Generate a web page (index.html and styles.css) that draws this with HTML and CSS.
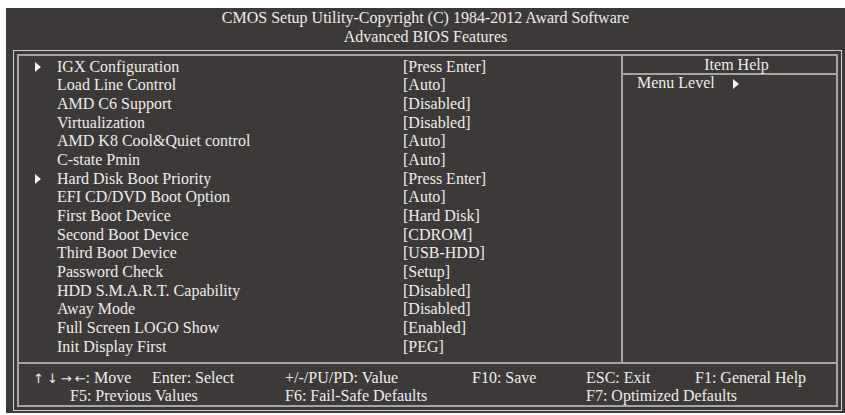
FILE: index.html
```html
<!DOCTYPE html>
<html>
<head>
  <meta charset="UTF-8">
  <title>Advanced BIOS Features</title>
  <link rel="stylesheet" href="styles.css">
</head>
<body>
  <div class="screen">
    <div class="title">
      CMOS Setup Utility-Copyright (C) 1984-2012 Award Software<br>
      Advanced BIOS Features
    </div>
    <div class="frame">
      <div class="frame-inner">
        <div class="body">
          <div class="items">
            <div class="row"><span class="mark"><span class="arrow"></span></span><span>IGX Configuration</span><span>[Press Enter]</span></div>
            <div class="row"><span class="mark"></span><span>Load Line Control</span><span>[Auto]</span></div>
            <div class="row"><span class="mark"></span><span>AMD C6 Support</span><span>[Disabled]</span></div>
            <div class="row"><span class="mark"></span><span>Virtualization</span><span>[Disabled]</span></div>
            <div class="row"><span class="mark"></span><span>AMD K8 Cool&amp;Quiet control</span><span>[Auto]</span></div>
            <div class="row"><span class="mark"></span><span>C-state Pmin</span><span>[Auto]</span></div>
            <div class="row"><span class="mark"><span class="arrow"></span></span><span>Hard Disk Boot Priority</span><span>[Press Enter]</span></div>
            <div class="row"><span class="mark"></span><span>EFI CD/DVD Boot Option</span><span>[Auto]</span></div>
            <div class="row"><span class="mark"></span><span>First Boot Device</span><span>[Hard Disk]</span></div>
            <div class="row"><span class="mark"></span><span>Second Boot Device</span><span>[CDROM]</span></div>
            <div class="row"><span class="mark"></span><span>Third Boot Device</span><span>[USB-HDD]</span></div>
            <div class="row"><span class="mark"></span><span>Password Check</span><span>[Setup]</span></div>
            <div class="row"><span class="mark"></span><span>HDD S.M.A.R.T. Capability</span><span>[Disabled]</span></div>
            <div class="row"><span class="mark"></span><span>Away Mode</span><span>[Disabled]</span></div>
            <div class="row"><span class="mark"></span><span>Full Screen LOGO Show</span><span>[Enabled]</span></div>
            <div class="row"><span class="mark"></span><span>Init Display First</span><span>[PEG]</span></div>
          </div>
          <div class="help">
            <div class="help-title">Item Help</div>
            <div class="help-text">Menu Level <span class="arrow help-arrow"></span></div>
          </div>
        </div>
        <div class="keys">
          <span><span class="dirs">&uarr;&darr;&rarr;&larr;</span>: Move</span>
          <span>Enter: Select</span>
          <span>+/-/PU/PD: Value</span>
          <span>F10: Save</span>
          <span>ESC: Exit</span>
          <span>F1: General Help</span>
          <span class="span2 indent">F5: Previous Values</span>
          <span class="span2">F6: Fail-Safe Defaults</span>
          <span class="span2">F7: Optimized Defaults</span>
        </div>
      </div>
    </div>
  </div>
</body>
</html>
```

FILE: styles.css
```css
body {
  margin: 0;
  background: #fff;
  font-family: "Liberation Serif", "Times New Roman", serif;
  font-size: 16px;
  color: #ececec;
}
.screen {
  margin: 8px 0 0 6px;
  width: 839px;
  height: 405px;
  background: #3d3938;
  overflow: hidden;
}
.title {
  height: 42px;
  padding-top: 1px;
  box-sizing: border-box;
  text-align: center;
  line-height: 18.7px;
}
.frame {
  margin: 0 3px 0 7px;
  height: 361px;
  box-sizing: border-box;
  border: 1px solid #cfcfcf;
  padding: 3px;
}
.frame-inner {
  height: 100%;
  box-sizing: border-box;
  border: 2px solid #a4a4a4;
  display: flex;
  flex-direction: column;
}
.body {
  display: flex;
  height: 307px;
  border-bottom: 2px solid #a4a4a4;
}
.items {
  width: 602px;
  padding-top: 1.5px;
}
.row {
  display: grid;
  grid-template-columns: 38px 346px 1fr;
  line-height: 18.7px;
  height: 18.7px;
  white-space: nowrap;
}
.mark {
  padding-left: 16px;
  display: flex;
  align-items: center;
}
.arrow {
  display: inline-block;
  width: 0;
  height: 0;
  border-left: 6px solid #f2f2f2;
  border-top: 5px solid transparent;
  border-bottom: 5px solid transparent;
}
.help {
  flex: 1;
  border-left: 2px solid #a4a4a4;
}
.help-title {
  height: 17px;
  line-height: 17px;
  text-align: center;
  padding-left: 14px;
  border-bottom: 2px solid #a4a4a4;
}
.help-text {
  padding-left: 14px;
  line-height: 16px;
  white-space: nowrap;
}
.help-arrow {
  margin-left: 14px;
  vertical-align: -1px;
}
.keys {
  flex: 1;
  display: grid;
  grid-template-columns: 119px 133px 187px 114px 109px 1fr;
  padding: 4.9px 0 0 14px;
  line-height: 17.6px;
  white-space: nowrap;
}
.dirs {
  font-family: "DejaVu Sans", sans-serif;
  font-size: 13px;
  letter-spacing: 3px;
  margin-right: -3px;
}
.span2 {
  grid-column: span 2;
}
.indent {
  padding-left: 37px;
}
```
